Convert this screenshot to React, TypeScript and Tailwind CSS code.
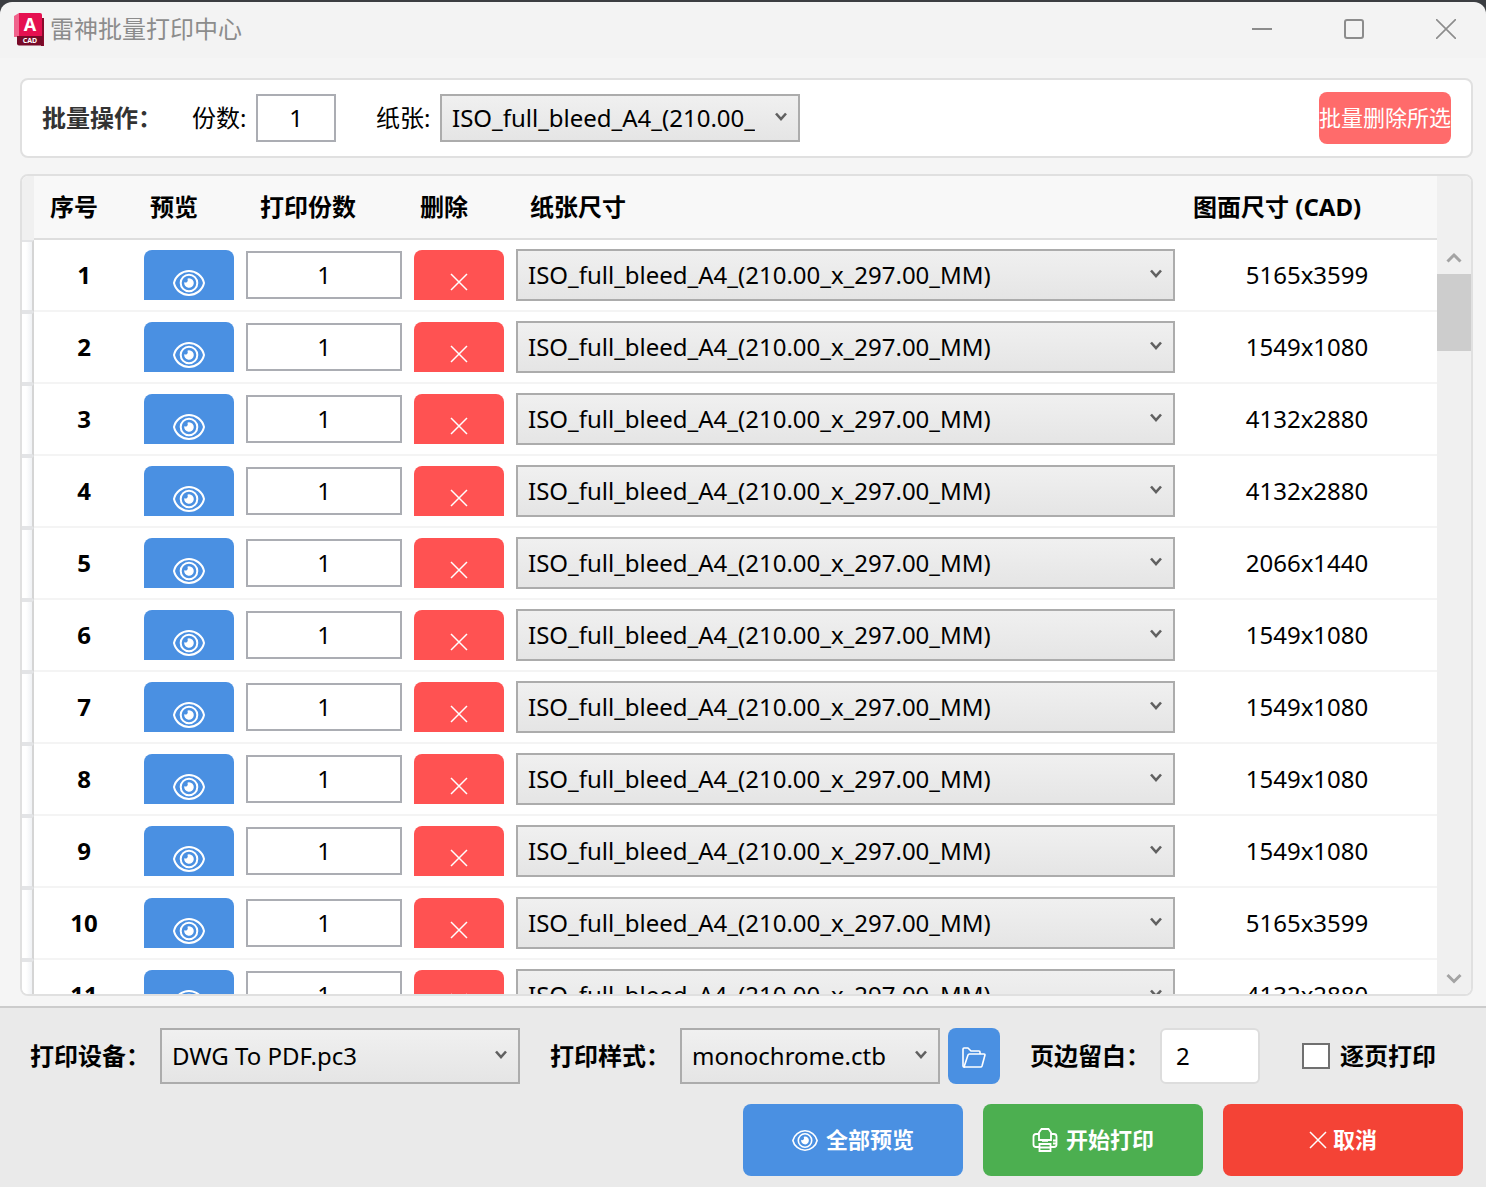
import { useState } from "react";
import type { ReactNode } from "react";

const PAPER = "ISO_full_bleed_A4_(210.00_x_297.00_MM)";

const sizes = [
  "5165x3599",
  "1549x1080",
  "4132x2880",
  "4132x2880",
  "2066x1440",
  "1549x1080",
  "1549x1080",
  "1549x1080",
  "1549x1080",
  "5165x3599",
  "4132x2880",
];

const headCell =
  "h-16 border-b-2 border-[#dedede] bg-[#f8f8f8] px-4 py-0 text-left leading-8 font-bold whitespace-nowrap";
const bodyCell = "h-[72px] border-b-2 border-[#f4f4f4] p-0";
const textBox =
  "block border-2 border-[#abadb3] bg-white pb-[2px] text-center text-black outline-none";
const blue = "bg-[#4a90e2] text-white";

function AppLogo() {
  return (
    <svg className="h-[33px] w-[30px] shrink-0" viewBox="0 0 30 33" aria-hidden="true">
      <path d="M0 3 5 0v24H0z" fill="#f0638c" />
      <path d="M27 5h3v28h-3z" fill="#8a0a2b" />
      <path d="M5 0h21q2 0 2 2v22H5z" fill="#e51050" />
      <path d="M3 23h26v9.500H5q-2 0-2-2z" fill="#780a28" />
      <text x="16" y="18" textAnchor="middle" fontSize="18" fontWeight="700" fill="#fff">
        A
      </text>
      <text x="16" y="30" textAnchor="middle" fontSize="7" fontWeight="700" fill="#fff">
        CAD
      </text>
    </svg>
  );
}

function EyeIcon({ className }: { className: string }) {
  return (
    <svg className={className} viewBox="0 0 32 26" fill="none" stroke="currentColor" strokeWidth="2" aria-hidden="true">
      <path d="M1 13C2.500 6 9 1 16 1s13.500 5 15 12c-1.500 7-8 12-15 12S2.500 20 1 13z" />
      <circle cx="16" cy="13" r="8.300" />
      <path
        d="M16 8.200a4.800 4.800 0 1 1-4.700 3.800q1.200 1 2.500.2 1.600-1 .8-2.600-.3-.7.200-1.200.600-.2 1.200-.2z"
        fill="currentColor"
        stroke="none"
      />
    </svg>
  );
}

function CrossIcon({ className }: { className: string }) {
  return (
    <svg className={className} viewBox="0 0 18 18" fill="none" stroke="currentColor" strokeWidth="1.500" aria-hidden="true">
      <path d="M1 1l16 16M17 1 1 17" />
    </svg>
  );
}

function PrinterIcon() {
  return (
    <svg className="h-6 w-[26px]" viewBox="0 0 26 24" fill="none" stroke="currentColor" strokeWidth="1.800" aria-hidden="true">
      <path d="M7 12V4.500L9.500 1h7L19 4.500V12z" />
      <path d="M7 6H4Q1.500 6 1.500 8.500v8Q1.500 19 4 19h3.500M19 6h3q2.500 0 2.500 2.500v8Q24.500 19 22 19h-3.500" />
      <path d="M7.500 15v8h11v-8" />
      <path d="M10 12.800h6M8 16h10M8 19.500h10M21 12.500h3M21 15.500h3" />
    </svg>
  );
}

function FolderIcon() {
  return (
    <svg className="h-[21px] w-6" viewBox="0 0 24 21" fill="none" stroke="currentColor" strokeWidth="1.600" strokeLinejoin="round" aria-hidden="true">
      <path d="M3 20H2q-1 0-1-1V2q0-1 1-1h4l3 3h8q1 0 1 1v2" />
      <path d="M2 20 6 8q.4-1 1.500-1H22q1.200 0 .9 1.200L20 19q-.3 1-1.300 1z" />
    </svg>
  );
}

type PickerProps = {
  label: string;
  value: string;
  className: string;
  id?: string;
};

function Picker({ label, value, className, id }: PickerProps) {
  return (
    <div className={`relative ${className}`}>
      <select
        id={id}
        aria-label={label}
        className="block size-full appearance-none border-2 border-[#acacac] bg-linear-to-b from-[#f0f0f0] to-[#e5e5e5] pr-[43px] pl-[10px] text-black outline-none"
      >
        <option>{value}</option>
      </select>
      <svg
        className="pointer-events-none absolute top-1/2 right-[13px] -mt-[6px] h-[10px] w-3"
        viewBox="0 0 12 10"
        fill="none"
        stroke="#606060"
        strokeWidth="2.600"
        aria-hidden="true"
      >
        <path d="M1 1.500l5 5.500 5-5.500" />
      </svg>
    </div>
  );
}

function TitleBar() {
  return (
    <header className="flex h-14 shrink-0 items-center rounded-t-xl bg-[#f3f3f3] pb-[2px] text-[#8c8c8c]">
      <div className="flex flex-1 items-center gap-[6px] pl-[14px]">
        <AppLogo />
        <h1 className="leading-8">雷神批量打印中心</h1>
      </div>
      <div className="flex gap-[72px] pr-[30px]">
        <button aria-label="最小化" className="size-5">
          <svg viewBox="0 0 20 20" fill="none" stroke="currentColor" strokeWidth="2">
            <path d="M0 10h20" />
          </svg>
        </button>
        <button aria-label="最大化" className="size-5">
          <svg viewBox="0 0 20 20" fill="none" stroke="currentColor" strokeWidth="2">
            <rect x="1" y="1" width="18" height="18" rx="2" />
          </svg>
        </button>
        <button aria-label="关闭" className="size-5">
          <svg viewBox="0 0 20 20" fill="none" stroke="currentColor" strokeWidth="1.600">
            <path d="M0 0l20 20M20 0 0 20" />
          </svg>
        </button>
      </div>
    </header>
  );
}

function BatchBar() {
  return (
    <section className="flex h-20 shrink-0 items-center rounded-lg border-2 border-[#e0e0e0] bg-white px-5">
      <span className="w-[150px] font-bold text-[#333]">批量操作：</span>
      <label className="w-16" htmlFor="copies">
        份数:
      </label>
      <input id="copies" className={`${textBox} h-12 w-20`} defaultValue="1" />
      <label className="ml-10 w-16" htmlFor="paper">
        纸张:
      </label>
      <Picker id="paper" label="纸张" value={PAPER} className="h-12 w-[360px]" />
      <button className="ml-auto h-[52px] w-[132px] rounded-lg bg-[#ff6b6b] text-[22px] whitespace-nowrap text-white">
        批量删除所选
      </button>
    </section>
  );
}

function ScrollBar() {
  return (
    <div className="flex w-[34px] shrink-0 flex-col items-center bg-[#f0f0f0] pt-[76px] pb-[10px]" aria-hidden="true">
      <svg className="h-3 w-4" viewBox="0 0 16 12" fill="none" stroke="#a3a3a3" strokeWidth="3">
        <path d="M1.500 9.500 8 3l6.500 6.500" />
      </svg>
      <div className="mt-[10px] h-[77px] w-full bg-[#cdcdcd]" />
      <svg className="mt-auto h-3 w-4" viewBox="0 0 16 12" fill="none" stroke="#a3a3a3" strokeWidth="3">
        <path d="M1.500 3 8 9.500 14.500 3" />
      </svg>
    </div>
  );
}

function SheetTable() {
  return (
    <section className="flex min-h-0 flex-1 overflow-hidden rounded-lg border-2 border-[#e0e0e0] bg-white">
      <div className="min-w-0 flex-1 overflow-hidden">
        <table className="w-full table-fixed border-separate border-spacing-0">
          <colgroup>
            <col className="w-3" />
            <col className="w-[100px]" />
            <col className="w-[110px]" />
            <col className="w-40" />
            <col className="w-[110px]" />
            <col />
            <col className="w-[260px]" />
          </colgroup>
          <thead>
            <tr>
              <td className="bg-[#f0f0f0] p-0" />
              <th className={headCell}>序号</th>
              <th className={headCell}>预览</th>
              <th className={headCell}>打印份数</th>
              <th className={headCell}>删除</th>
              <th className={headCell}>纸张尺寸</th>
              <th className={headCell}>图面尺寸 (CAD)</th>
            </tr>
          </thead>
          <tbody>
            {sizes.map((size, i) => (
              <tr key={i}>
                <td className="border-y-2 border-r-2 border-y-[#e3e4e6] border-r-[#d5d5d5] bg-linear-to-r from-white from-40% to-[#f0f2f5] p-0" />
                <th className={`${bodyCell} text-center font-bold`} scope="row">
                  {i + 1}
                </th>
                <td className={bodyCell}>
                  <button aria-label="预览" className={`${blue} mx-auto flex h-[50px] w-[90px] items-end justify-center rounded-t-lg pb-1`}>
                    <EyeIcon className="h-[26px] w-8" />
                  </button>
                </td>
                <td className={bodyCell}>
                  <input aria-label="打印份数" className={`${textBox} mx-auto h-12 w-[156px]`} defaultValue="1" />
                </td>
                <td className={bodyCell}>
                  <button aria-label="删除" className="mx-auto flex h-[50px] w-[90px] items-end justify-center rounded-t-lg bg-[#ff5252] pb-[9px] text-white">
                    <CrossIcon className="size-[18px]" />
                  </button>
                </td>
                <td className={`${bodyCell} px-[2px]`}>
                  <Picker label="纸张尺寸" value={PAPER} className="h-[52px]" />
                </td>
                <td className={`${bodyCell} text-center`}>{size}</td>
              </tr>
            ))}
          </tbody>
        </table>
      </div>
      <ScrollBar />
    </section>
  );
}

function ActionButton({ className, children }: { className: string; children: ReactNode }) {
  return (
    <button className={`flex h-[72px] items-center justify-center rounded-lg text-[22px] font-bold text-white ${className}`}>
      {children}
    </button>
  );
}

function Footer() {
  const [single, setSingle] = useState(false);

  return (
    <footer className="shrink-0 border-t-2 border-[#cccccc] bg-[#eaeaea] pt-5 pb-[11px]">
      <div className="flex items-center pl-[30px]">
        <label className="w-[130px] font-bold" htmlFor="device">
          打印设备：
        </label>
        <Picker id="device" label="打印设备" value="DWG To PDF.pc3" className="h-14 w-[360px]" />
        <label className="ml-[30px] w-[130px] font-bold" htmlFor="style">
          打印样式：
        </label>
        <Picker id="style" label="打印样式" value="monochrome.ctb" className="h-14 w-[260px]" />
        <button aria-label="浏览" className={`${blue} ml-2 flex h-14 w-[52px] items-center justify-center rounded-lg pt-[2px]`}>
          <FolderIcon />
        </button>
        <label className="ml-[30px] w-[130px] font-bold" htmlFor="margin">
          页边留白：
        </label>
        <input
          id="margin"
          className="h-14 w-[100px] rounded-md border-2 border-[#dddddd] bg-white px-[14px] pb-[2px] text-black outline-none"
          defaultValue="2"
        />
        <label className="ml-[42px] flex items-center gap-[10px] font-bold">
          <input
            type="checkbox"
            className="h-[26px] w-7 appearance-none border-2 border-[#707070] bg-white checked:bg-[#4a90e2]"
            checked={single}
            onChange={(e) => setSingle(e.target.checked)}
          />
          逐页打印
        </label>
      </div>
      <div className="mt-5 flex justify-end gap-5 pr-[23px]">
        <ActionButton className="w-[220px] gap-2 bg-[#4a90e2]">
          <EyeIcon className="h-[21px] w-[26px]" />
          全部预览
        </ActionButton>
        <ActionButton className="w-[220px] gap-2 bg-[#4caf50]">
          <PrinterIcon />
          开始打印
        </ActionButton>
        <ActionButton className="w-60 gap-[6px] bg-[#f44336]">
          <CrossIcon className="size-[18px]" />
          取消
        </ActionButton>
      </div>
    </footer>
  );
}

export default function App() {
  return (
    <div className="flex h-screen flex-col bg-[#3b3d41] pt-[2px] font-['Noto_Sans','Noto_Sans_CJK_SC',sans-serif] text-2xl text-black">
      <TitleBar />
      <main className="flex min-h-0 flex-1 flex-col gap-4 bg-[#f5f5f5] pt-5 pr-[13px] pb-[10px] pl-5">
        <BatchBar />
        <SheetTable />
      </main>
      <Footer />
    </div>
  );
}
